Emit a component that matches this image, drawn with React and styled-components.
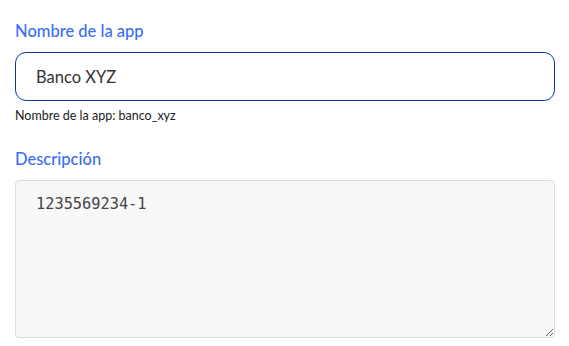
import React from 'react'
import styled, { createGlobalStyle } from 'styled-components'

const GlobalStyle = createGlobalStyle`
  body {
    margin: 0;
    background: #fff;
    font-family: 'Lato', 'Noto Sans', sans-serif;
  }
`

const Form = styled.form`
  width: 540px;
  padding: 21px 15px 0;
  display: flex;
  flex-direction: column;
`

const Field = styled.div`
  display: flex;
  flex-direction: column;
  margin-bottom: ${p => p.gap || 0}px;
`

const Label = styled.label`
  color: #3a6ef2;
  font-size: 16.5px;
  font-weight: 500;
  line-height: 20px;
  margin-bottom: 11px;
`

const TextInput = styled.input`
  box-sizing: border-box;
  height: 49px;
  width: 100%;
  border: 1px solid #0b3a9c;
  border-radius: 11px;
  padding: 0 20px;
  font-family: 'Lato', 'Noto Sans', sans-serif;
  font-size: 16.5px;
  color: #333;
  outline: none;
`

const Hint = styled.p`
  margin: 7px 0 0;
  font-size: 12.5px;
  color: #222;
  line-height: 15px;
`

const TextArea = styled.textarea`
  box-sizing: border-box;
  width: 100%;
  height: 158px;
  background: #f8f8f8;
  border: 1px solid #dcdcdc;
  border-radius: 4px;
  padding: 14px 20px;
  font-family: 'DejaVu Sans Mono', monospace;
  font-size: 15.3px;
  color: #444;
  outline: none;
`

export default function App() {
  return (
    <>
      <GlobalStyle />
      <Form>
        <Field gap={26}>
          <Label htmlFor="app-name">Nombre de la app</Label>
          <TextInput id="app-name" defaultValue="Banco XYZ" />
          <Hint>Nombre de la app: banco_xyz</Hint>
        </Field>
        <Field>
          <Label htmlFor="app-desc">Descripción</Label>
          <TextArea id="app-desc" defaultValue="1235569234-1" />
        </Field>
      </Form>
    </>
  )
}
